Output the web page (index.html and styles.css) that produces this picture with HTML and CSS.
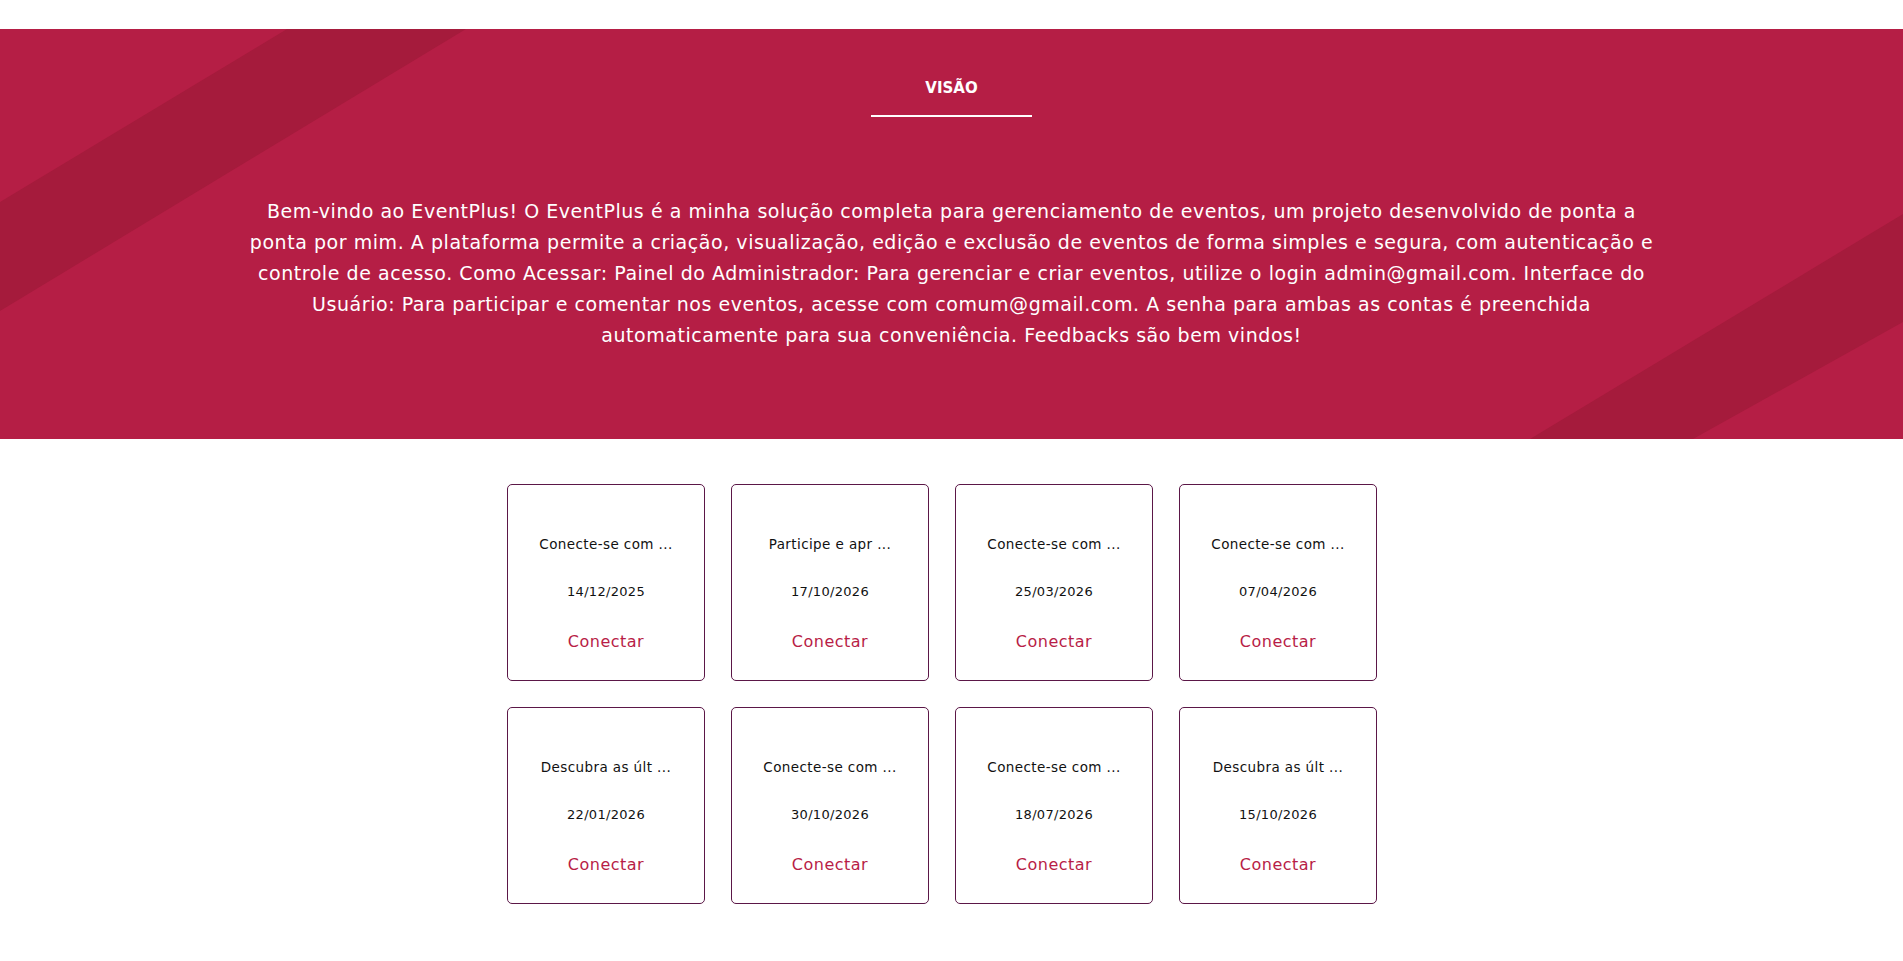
FILE: index.html
```html
<!DOCTYPE html>
<html lang="pt-BR">
<head>
<meta charset="utf-8">
<title>EventPlus</title>
<link rel="stylesheet" href="styles.css">
</head>
<body>
<div class="top-space"></div>
<section class="banner">
  <svg class="banner-bg" viewBox="0 0 1903 410" preserveAspectRatio="none" aria-hidden="true">
    <polygon points="287,0 466,0 0,282 0,173" fill="#a51b3c"/>
    <polygon points="1530,410 1903,185 1903,293 1693,410" fill="#a51b3c"/>
  </svg>
  <div class="banner-content">
    <h2 class="section-title">VISÃO</h2>
    <p class="vision-text">Bem-vindo ao EventPlus! O EventPlus é a minha solução completa para gerenciamento de eventos, um projeto desenvolvido de ponta a<br>ponta por mim. A plataforma permite a criação, visualização, edição e exclusão de eventos de forma simples e segura, com autenticação e<br>controle de acesso. Como Acessar: Painel do Administrador: Para gerenciar e criar eventos, utilize o login admin@gmail.com. Interface do<br>Usuário: Para participar e comentar nos eventos, acesse com comum@gmail.com. A senha para ambas as contas é preenchida<br>automaticamente para sua conveniência. Feedbacks são bem vindos!</p>
  </div>
</section>
<section class="events">
  <div class="event-grid">
    <div class="event-card"><p class="event-title">Conecte-se com ...</p><p class="event-date">14/12/2025</p><a class="event-link" href="#">Conectar</a></div>
    <div class="event-card"><p class="event-title">Participe e apr ...</p><p class="event-date">17/10/2026</p><a class="event-link" href="#">Conectar</a></div>
    <div class="event-card"><p class="event-title">Conecte-se com ...</p><p class="event-date">25/03/2026</p><a class="event-link" href="#">Conectar</a></div>
    <div class="event-card"><p class="event-title">Conecte-se com ...</p><p class="event-date">07/04/2026</p><a class="event-link" href="#">Conectar</a></div>
    <div class="event-card"><p class="event-title">Descubra as últ ...</p><p class="event-date">22/01/2026</p><a class="event-link" href="#">Conectar</a></div>
    <div class="event-card"><p class="event-title">Conecte-se com ...</p><p class="event-date">30/10/2026</p><a class="event-link" href="#">Conectar</a></div>
    <div class="event-card"><p class="event-title">Conecte-se com ...</p><p class="event-date">18/07/2026</p><a class="event-link" href="#">Conectar</a></div>
    <div class="event-card"><p class="event-title">Descubra as últ ...</p><p class="event-date">15/10/2026</p><a class="event-link" href="#">Conectar</a></div>
  </div>
</section>
</body>
</html>
```
FILE: styles.css
```css
* { box-sizing: border-box; }
html, body { margin: 0; padding: 0; background: #ffffff; }
body { font-family: "DejaVu Sans", "Noto Sans", sans-serif; color: #000; }

.top-space { height: 29px; }

.banner {
  position: relative;
  height: 410px;
  background: #b51e45;
  overflow: hidden;
}
.banner-bg {
  position: absolute;
  left: 0; top: 0;
  width: 100%; height: 100%;
}
.banner-content {
  position: relative;
  display: flex;
  flex-direction: column;
  align-items: center;
  padding-top: 49px;
}
.section-title {
  margin: 0;
  font-size: 15px;
  line-height: 20px;
  font-weight: bold;
  color: #fff;
  width: 161px;
  text-align: center;
  padding-bottom: 17px;
  border-bottom: 2px solid #fff;
}
.vision-text {
  margin: 79px 0 0;
  color: #fff;
  font-size: 19px;
  line-height: 31px;
  letter-spacing: 0.55px;
  text-align: center;
  white-space: nowrap;
}

.events {
  padding: 45px 19px 60px 0;
  display: flex;
  justify-content: center;
}
.event-grid {
  display: grid;
  grid-template-columns: repeat(4, 198px);
  grid-auto-rows: 197px;
  gap: 26px;
}
.event-card {
  border: 1px solid #5b1747;
  border-radius: 5px;
  display: flex;
  flex-direction: column;
  align-items: center;
  padding-top: 49px;
  gap: 28px;
}
.event-title, .event-date {
  margin: 0;
  font-size: 13.5px;
  line-height: 20px;
  color: #111;
}
.event-title { letter-spacing: 0.4px; }
.event-date { font-size: 13px; letter-spacing: 0.3px; }
.event-link {
  font-size: 16px;
  line-height: 24px;
  color: #b81d47;
  text-decoration: none;
  letter-spacing: 0.5px;
}
```
